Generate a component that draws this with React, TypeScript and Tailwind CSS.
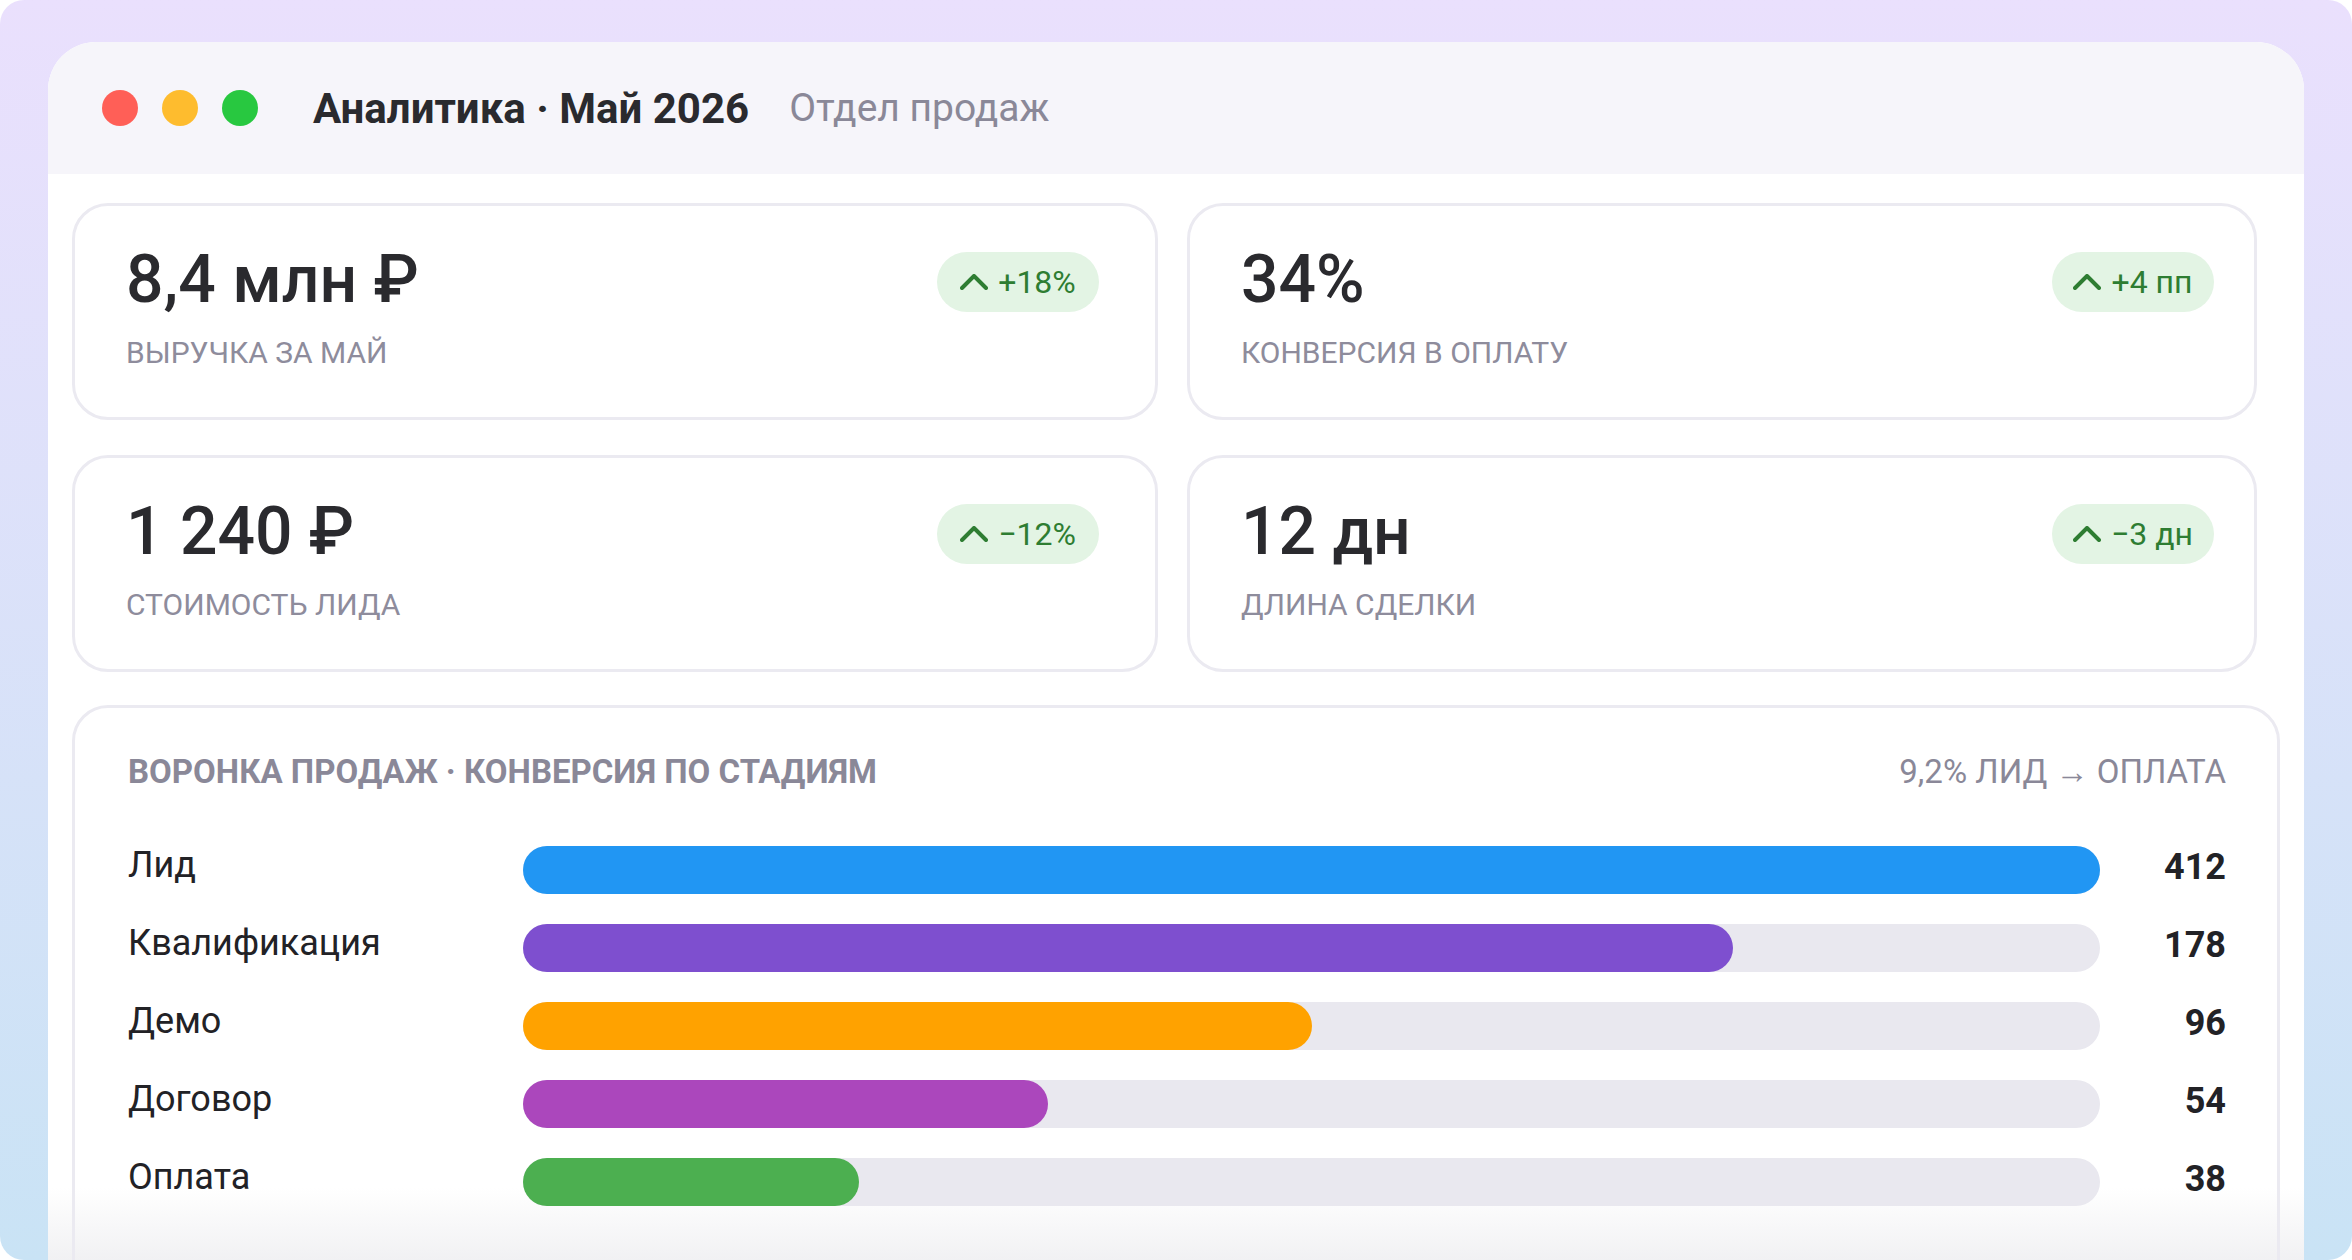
import React from "react";

const KPIS = [
  { value: "8,4 млн ₽", label: "ВЫРУЧКА ЗА МАЙ", delta: "+18%" },
  { value: "34%", label: "КОНВЕРСИЯ В ОПЛАТУ", delta: "+4 пп" },
  { value: "1 240 ₽", label: "СТОИМОСТЬ ЛИДА", delta: "−12%" },
  { value: "12 дн", label: "ДЛИНА СДЕЛКИ", delta: "−3 дн" },
];

const STAGES = [
  { name: "Лид", count: 412, pct: 100, color: "bg-[#2196f3]" },
  { name: "Квалификация", count: 178, pct: 76.7, color: "bg-[#7e4fcf]" },
  { name: "Демо", count: 96, pct: 50, color: "bg-[#ffa200]" },
  { name: "Договор", count: 54, pct: 33.3, color: "bg-[#ab47bc]" },
  { name: "Оплата", count: 38, pct: 21.3, color: "bg-[#4caf50]" },
];

function Chevron() {
  return (
    <svg width="28" height="16" viewBox="0 0 28 16" fill="none" className="shrink-0">
      <polyline points="2,14 14,2 26,14" stroke="#2e7d32" strokeWidth="4" strokeLinecap="round" strokeLinejoin="round" />
    </svg>
  );
}

function Badge({ text }: { text: string }) {
  return (
    <div className="mt-[5px] flex h-[60px] w-[162px] items-center justify-center gap-[10px] rounded-full bg-[#e3f4e4] text-[32px] leading-none text-[#2e7d32]">
      <Chevron />
      <span>{text}</span>
    </div>
  );
}

function KpiCard({ value, label, delta }: { value: string; label: string; delta: string }) {
  return (
    <div className="h-[217px] rounded-[36px] border-[3px] border-[#ebeaf1] bg-white pl-[51px] pt-[41px]">
      <div className="flex w-[973px] items-start justify-between">
        <div>
          <div className="text-[66px] font-medium leading-none text-[#2a2a2e]">{value}</div>
          <div className="mt-[22px] text-[30px] leading-[36px] text-[#8e8c9c]">{label}</div>
        </div>
        <Badge text={delta} />
      </div>
    </div>
  );
}

function StageRow({ name, count, pct, color }: (typeof STAGES)[0]) {
  return (
    <div className="grid h-[48px] grid-cols-[395px_1fr_126px] items-center">
      <div className="-mt-[10px] text-[36px] leading-[42px] text-[#222226]">{name}</div>
      <div className="h-[48px] rounded-full bg-[#e9e8ef]">
        <div className={`h-full rounded-full ${color}`} style={{ width: `${pct}%` }} />
      </div>
      <div className="-mt-[6px] text-right text-[36px] font-bold leading-[42px] text-[#222226]">{count}</div>
    </div>
  );
}

export default function App() {
  return (
    <div className="h-[1260px] w-[2352px] overflow-hidden bg-white font-['Roboto',sans-serif]">
      <div className="h-full w-full overflow-hidden rounded-[24px] bg-gradient-to-b from-[#eae0fd] to-[#c9e3f5] px-[48px] pt-[42px]">
        <div className="relative h-[1260px] overflow-hidden rounded-t-[48px] bg-white">
          {/* bottom fade, behind the content */}
          <div className="pointer-events-none absolute bottom-[42px] left-0 right-0 h-[72px] bg-gradient-to-b from-white/0 to-[#f1f1f3]" />

          {/* title bar */}
          <div className="relative flex h-[132px] items-center bg-[#f6f5fa] pl-[54px]">
            <div className="flex gap-[24px]">
              <span className="h-[36px] w-[36px] rounded-full bg-[#ff5f57]" />
              <span className="h-[36px] w-[36px] rounded-full bg-[#febc2e]" />
              <span className="h-[36px] w-[36px] rounded-full bg-[#28c840]" />
            </div>
            <div className="ml-[55px] text-[42px] font-bold text-[#2a2a2e]">Аналитика · Май 2026</div>
            <div className="ml-[40px] text-[39px] text-[#8a8898]">Отдел продаж</div>
          </div>

          {/* content */}
          <div className="relative pl-[24px] pt-[29px]">
            <div className="grid grid-cols-[1086px_1070px] gap-x-[29px] gap-y-[35px]">
              {KPIS.map((k) => (
                <KpiCard key={k.label} {...k} />
              ))}
            </div>

            <div className="mt-[33px] h-[700px] w-[2208px] rounded-[36px] border-[3px] border-[#ebeaf1] pl-[53px] pr-[51px] pt-[44px]">
              <div className="flex items-center justify-between text-[33px] leading-[40px] text-[#8a8898]">
                <span className="font-bold">ВОРОНКА ПРОДАЖ · КОНВЕРСИЯ ПО СТАДИЯМ</span>
                <span>9,2% ЛИД → ОПЛАТА</span>
              </div>
              <div className="mt-[54px] flex flex-col gap-[30px]">
                {STAGES.map((s) => (
                  <StageRow key={s.name} {...s} />
                ))}
              </div>
            </div>
          </div>
        </div>
      </div>
    </div>
  );
}
